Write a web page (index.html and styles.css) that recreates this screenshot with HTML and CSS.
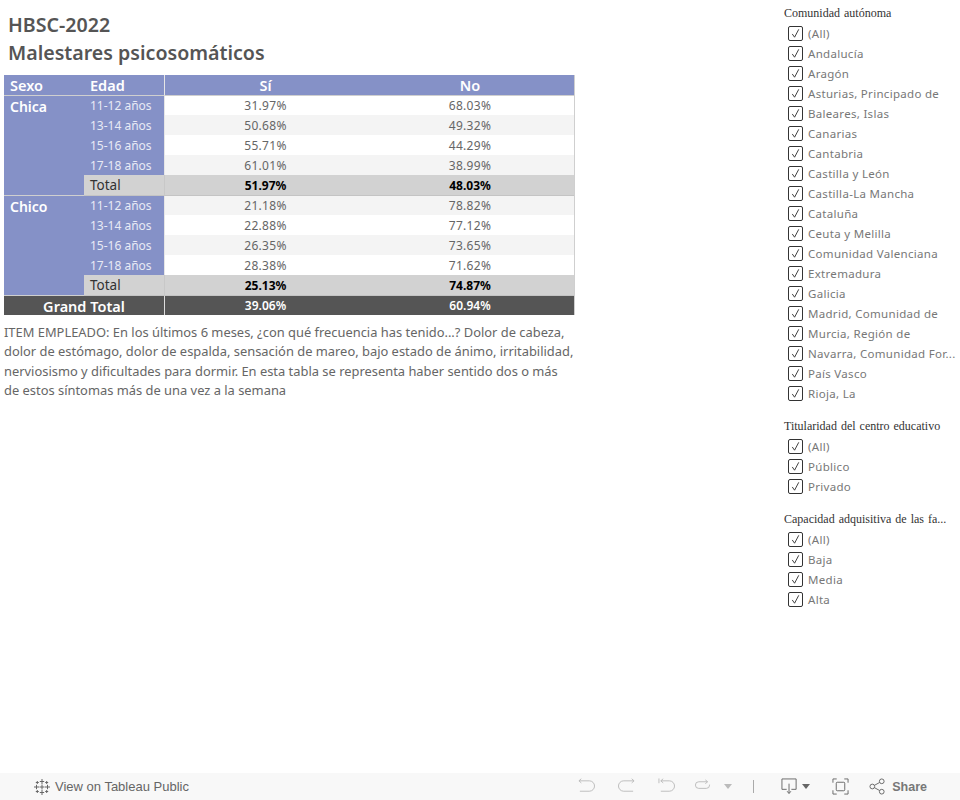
FILE: index.html
```html
<!DOCTYPE html>
<html lang="es">
<head>
<meta charset="utf-8">
<title>HBSC-2022</title>
<link rel="stylesheet" href="styles.css">
</head>
<body>
<div class="page">
  <main class="main">
    <h1 class="title">HBSC-2022<br>Malestares psicosomáticos</h1>
    <table class="crosstab">
      <colgroup><col class="c1"><col class="c2"><col class="c3"><col class="c4"></colgroup>
      <thead>
        <tr class="head"><th class="left">Sexo</th><th class="left sep">Edad</th><th>Sí</th><th>No</th></tr>
      </thead>
      <tbody>
        <tr class="first"><th class="sexo" rowspan="5">Chica</th><td class="edad">11-12 años</td><td>31.97%</td><td>68.03%</td></tr>
        <tr class="alt"><td class="edad">13-14 años</td><td>50.68%</td><td>49.32%</td></tr>
        <tr><td class="edad">15-16 años</td><td>55.71%</td><td>44.29%</td></tr>
        <tr class="alt"><td class="edad">17-18 años</td><td>61.01%</td><td>38.99%</td></tr>
        <tr class="total"><td class="tlabel">Total</td><td>51.97%</td><td>48.03%</td></tr>
        <tr class="alt first"><th class="sexo" rowspan="5">Chico</th><td class="edad">11-12 años</td><td>21.18%</td><td>78.82%</td></tr>
        <tr><td class="edad">13-14 años</td><td>22.88%</td><td>77.12%</td></tr>
        <tr class="alt"><td class="edad">15-16 años</td><td>26.35%</td><td>73.65%</td></tr>
        <tr><td class="edad">17-18 años</td><td>28.38%</td><td>71.62%</td></tr>
        <tr class="total"><td class="tlabel">Total</td><td>25.13%</td><td>74.87%</td></tr>
        <tr class="grand"><th colspan="2">Grand Total</th><td>39.06%</td><td>60.94%</td></tr>
      </tbody>
    </table>
    <p class="note">ITEM EMPLEADO: En los últimos 6 meses, ¿con qué frecuencia has tenido...? Dolor de cabeza, dolor de estómago, dolor de espalda, sensación de mareo, bajo estado de ánimo, irritabilidad, nerviosismo y dificultades para dormir. En esta tabla se representa haber sentido dos o más de estos síntomas más de una vez a la semana</p>
  </main>
  <aside class="filters">
    <section class="filter">
      <h2 class="ftitle">Comunidad autónoma</h2>
      <ul class="flist">
        <li><span class="box"><svg viewBox="0 0 14 14"><path d="M3.5 7.5 6 11 10.5 2.5"/></svg></span>(All)</li>
        <li><span class="box"><svg viewBox="0 0 14 14"><path d="M3.5 7.5 6 11 10.5 2.5"/></svg></span>Andalucía</li>
        <li><span class="box"><svg viewBox="0 0 14 14"><path d="M3.5 7.5 6 11 10.5 2.5"/></svg></span>Aragón</li>
        <li><span class="box"><svg viewBox="0 0 14 14"><path d="M3.5 7.5 6 11 10.5 2.5"/></svg></span>Asturias, Principado de</li>
        <li><span class="box"><svg viewBox="0 0 14 14"><path d="M3.5 7.5 6 11 10.5 2.5"/></svg></span>Baleares, Islas</li>
        <li><span class="box"><svg viewBox="0 0 14 14"><path d="M3.5 7.5 6 11 10.5 2.5"/></svg></span>Canarias</li>
        <li><span class="box"><svg viewBox="0 0 14 14"><path d="M3.5 7.5 6 11 10.5 2.5"/></svg></span>Cantabria</li>
        <li><span class="box"><svg viewBox="0 0 14 14"><path d="M3.5 7.5 6 11 10.5 2.5"/></svg></span>Castilla y León</li>
        <li><span class="box"><svg viewBox="0 0 14 14"><path d="M3.5 7.5 6 11 10.5 2.5"/></svg></span>Castilla-La Mancha</li>
        <li><span class="box"><svg viewBox="0 0 14 14"><path d="M3.5 7.5 6 11 10.5 2.5"/></svg></span>Cataluña</li>
        <li><span class="box"><svg viewBox="0 0 14 14"><path d="M3.5 7.5 6 11 10.5 2.5"/></svg></span>Ceuta y Melilla</li>
        <li><span class="box"><svg viewBox="0 0 14 14"><path d="M3.5 7.5 6 11 10.5 2.5"/></svg></span>Comunidad Valenciana</li>
        <li><span class="box"><svg viewBox="0 0 14 14"><path d="M3.5 7.5 6 11 10.5 2.5"/></svg></span>Extremadura</li>
        <li><span class="box"><svg viewBox="0 0 14 14"><path d="M3.5 7.5 6 11 10.5 2.5"/></svg></span>Galicia</li>
        <li><span class="box"><svg viewBox="0 0 14 14"><path d="M3.5 7.5 6 11 10.5 2.5"/></svg></span>Madrid, Comunidad de</li>
        <li><span class="box"><svg viewBox="0 0 14 14"><path d="M3.5 7.5 6 11 10.5 2.5"/></svg></span>Murcia, Región de</li>
        <li><span class="box"><svg viewBox="0 0 14 14"><path d="M3.5 7.5 6 11 10.5 2.5"/></svg></span>Navarra, Comunidad For...</li>
        <li><span class="box"><svg viewBox="0 0 14 14"><path d="M3.5 7.5 6 11 10.5 2.5"/></svg></span>País Vasco</li>
        <li><span class="box"><svg viewBox="0 0 14 14"><path d="M3.5 7.5 6 11 10.5 2.5"/></svg></span>Rioja, La</li>
      </ul>
    </section>
    <section class="filter">
      <h2 class="ftitle">Titularidad del centro educativo</h2>
      <ul class="flist">
        <li><span class="box"><svg viewBox="0 0 14 14"><path d="M3.5 7.5 6 11 10.5 2.5"/></svg></span>(All)</li>
        <li><span class="box"><svg viewBox="0 0 14 14"><path d="M3.5 7.5 6 11 10.5 2.5"/></svg></span>Público</li>
        <li><span class="box"><svg viewBox="0 0 14 14"><path d="M3.5 7.5 6 11 10.5 2.5"/></svg></span>Privado</li>
      </ul>
    </section>
    <section class="filter">
      <h2 class="ftitle">Capacidad adquisitiva de las fa...</h2>
      <ul class="flist">
        <li><span class="box"><svg viewBox="0 0 14 14"><path d="M3.5 7.5 6 11 10.5 2.5"/></svg></span>(All)</li>
        <li><span class="box"><svg viewBox="0 0 14 14"><path d="M3.5 7.5 6 11 10.5 2.5"/></svg></span>Baja</li>
        <li><span class="box"><svg viewBox="0 0 14 14"><path d="M3.5 7.5 6 11 10.5 2.5"/></svg></span>Media</li>
        <li><span class="box"><svg viewBox="0 0 14 14"><path d="M3.5 7.5 6 11 10.5 2.5"/></svg></span>Alta</li>
      </ul>
    </section>
  </aside>
</div>
<footer class="toolbar">
  <div class="tb-left">
    <svg class="logo" viewBox="0 0 18 18"><path d="M9 1v5M6.800 3.500h4.400M9 12v5M6.800 14.500h4.400M1 9h5M3.500 6.800v4.400M12 9h5M14.500 6.800v4.400M9 6.500v5M6.500 9h5M4.300 3v3M2.800 4.500h3M13.700 3v3M12.200 4.500h3M4.300 12v3M2.800 13.500h3M13.700 12v3M12.200 13.500h3"/></svg>
    <span>View on Tableau Public</span>
  </div>
  <div class="tb-right">
    <svg class="ic dis" viewBox="0 0 18 18"><path d="M1 3h11a5 5 0 0 1 0 11H2M3.500 .8 1 3l2.500 2.200"/></svg>
    <svg class="ic dis" viewBox="0 0 18 18"><path d="M17 3H6a5 5 0 0 0 0 11h10M14.500 .8 17 3l-2.500 2.200"/></svg>
    <svg class="ic dis" viewBox="0 0 18 18"><path d="M1 .5v5M3 3h9a5 5 0 0 1 0 11H3M5.500 .8 3 3l2.500 2.200"/></svg>
    <svg class="ic dis" viewBox="0 0 18 18"><path d="M14 4H5a3.500 3.500 0 0 0 0 7h8a3.500 3.500 0 0 0 3.500-3.500V7M12 2l2.500 2L12 6"/></svg>
    <span class="caret dim"></span>
    <span class="divider"></span>
    <svg class="ic dl" viewBox="0 0 18 18"><path d="M6 12H1V1h15v11h-5M8.500 6v10M6.500 14l2 2.500 2-2.500"/></svg>
    <span class="caret"></span>
    <svg class="ic full" viewBox="0 0 18 18"><path d="M1 5V1h4M13 1h4v4M17 13v4h-4M5 17H1v-4"/><rect x="4.500" y="4.500" width="9" height="9" rx="1"/></svg>
    <span class="share"><svg class="ic" viewBox="0 0 18 18"><circle cx="3.500" cy="9" r="2.500"/><circle cx="13.500" cy="3.500" r="2.500"/><circle cx="13.500" cy="14.500" r="2.500"/><path d="M5.700 7.800l5.600-3.100M5.700 10.200l5.600 3.100"/></svg>Share</span>
  </div>
</footer>
</body>
</html>
```
FILE: styles.css
```css
* { box-sizing: border-box; }
html, body { margin: 0; height: 100%; }
body {
  width: 960px;
  height: 800px;
  overflow: hidden;
  display: flex;
  flex-direction: column;
  background: #fff;
  font-family: "Noto Sans", "Open Sans", sans-serif;
  color: #555;
}
.page { flex: 1; display: flex; justify-content: space-between; min-height: 0; }
.main { width: 580px; padding: 11px 0 0 4px; }
.title {
  margin: 0 0 8px 4px;
  font-size: 19.6px;
  line-height: 28px;
  font-weight: 600;
  color: #555;
}
.crosstab {
  border-collapse: separate;
  border-spacing: 0;
  table-layout: fixed;
  width: 571px;
  font-size: 12px;
  letter-spacing: .3px;
  color: #666;
  border-right: 1px solid #cfcfcf;
}
.c1 { width: 80px; }
.c2 { width: 81px; }
.c3 { width: 201px; }
.c4 { width: 208px; }
.crosstab th, .crosstab td {
  height: 20px;
  padding: 0;
  text-align: center;
  font-weight: 400;
  line-height: 19px;
  white-space: nowrap;
}
.crosstab .first td { height: 19px; }
.crosstab .head th {
  height: 21px;
  padding-top: 1px;
  line-height: 19px;
  background: #8591c7;
  color: #fff;
  font-size: 14.5px;
  letter-spacing: 0;
  font-weight: 600;
  border-bottom: 1px solid #cfcfcf;
}
.crosstab .head .left { text-align: left; padding-left: 6px; }
.crosstab .head .sep { border-right: 1px solid #e6e6e6; }
.crosstab .sexo {
  background: #8591c7;
  color: #fff;
  font-size: 14px;
  letter-spacing: 0;
  font-weight: 600;
  text-align: left;
  vertical-align: top;
  padding: 1px 0 0 6px;
  border-bottom: 1px solid #cfcfcf;
}
.crosstab .edad {
  background: #8591c7;
  color: #e8eaf5;
  letter-spacing: 0;
  text-align: left;
  padding-left: 6px;
  border-right: 1px solid #e6e6e6;
}
.alt td { background: #f4f4f4; }
.crosstab .alt .edad { background: #8591c7; }
.crosstab .total td {
  height: 21px;
  padding-top: 1px;
  line-height: 19px;
  background: #d2d2d2;
  color: #000;
  letter-spacing: 0;
  font-weight: 700;
  border-bottom: 1px solid #c4c4c4;
}
.crosstab .total .tlabel {
  text-align: left;
  padding-left: 6px;
  font-size: 13.5px;
  font-weight: 400;
  color: #333;
  border-right: 1px solid #c8c8c8;
}
.crosstab .grand th, .crosstab .grand td {
  height: 19px;
  padding-top: 1px;
  line-height: 18px;
  background: #555;
  color: #fff;
}
.crosstab .grand th { font-size: 14.5px; letter-spacing: 0; font-weight: 600; border-right: 1px solid #ddd; }
.crosstab .grand td { font-weight: 600; letter-spacing: 0; }
.note {
  margin: 8px 0 0;
  width: 572px;
  font-size: 12.9px;
  line-height: 19.3px;
  color: #666;
}
.filters { width: 176px; padding-top: 5px; }
.filter { margin-bottom: 15.2px; }
.ftitle {
  margin: 0;
  font-family: "Liberation Serif", serif;
  font-size: 12px;
  font-weight: 400;
  line-height: 16px;
  word-spacing: 1px;
  color: #333;
  white-space: nowrap;
}
.flist { list-style: none; margin: 0; padding: 2px 0 0 4px; }
.flist li {
  display: flex;
  align-items: center;
  height: 20px;
  font-size: 11.5px;
  letter-spacing: .3px;
  color: #777;
  white-space: nowrap;
}
.box {
  width: 15px;
  height: 15px;
  margin-right: 5px;
  border: 1px solid #333;
  border-radius: 2px;
  flex: none;
  display: flex;
}
.box svg { width: 13px; height: 13px; fill: none; stroke: #333; stroke-width: 1; }
.toolbar {
  height: 27px;
  flex: none;
  background: #f8f8f8;
  display: flex;
  align-items: center;
  justify-content: space-between;
  padding: 0 33px;
  font-family: "Liberation Sans", sans-serif;
  font-size: 13px;
  color: #666;
}
.tb-left, .tb-right, .share { display: flex; align-items: center; }
.logo { width: 18px; height: 18px; margin-right: 4px; fill: none; stroke: #666; stroke-width: 1; }
.ic { width: 17px; height: 17px; fill: none; stroke: #666; stroke-width: 1; }
.ic.dis { stroke: #bbb; margin-right: 23px; }
.ic.dis:nth-child(3) { margin-right: 19px; }
.ic.dis:nth-child(4) { margin-right: 13px; }
.caret { width: 0; height: 0; border: 4px solid transparent; border-top: 5px solid #666; border-bottom: 0; margin-left: 4px; }
.caret.dim { border-top-color: #bbb; margin-left: 0; }
.divider { width: 1px; height: 13px; background: #aaa; margin: 0 27px 0 21px; }
.full { margin: 0 20px 0 22px; }
.share { font-weight: 700; font-size: 12.5px; color: #777; }
.share .ic { margin-right: 6px; }
```
